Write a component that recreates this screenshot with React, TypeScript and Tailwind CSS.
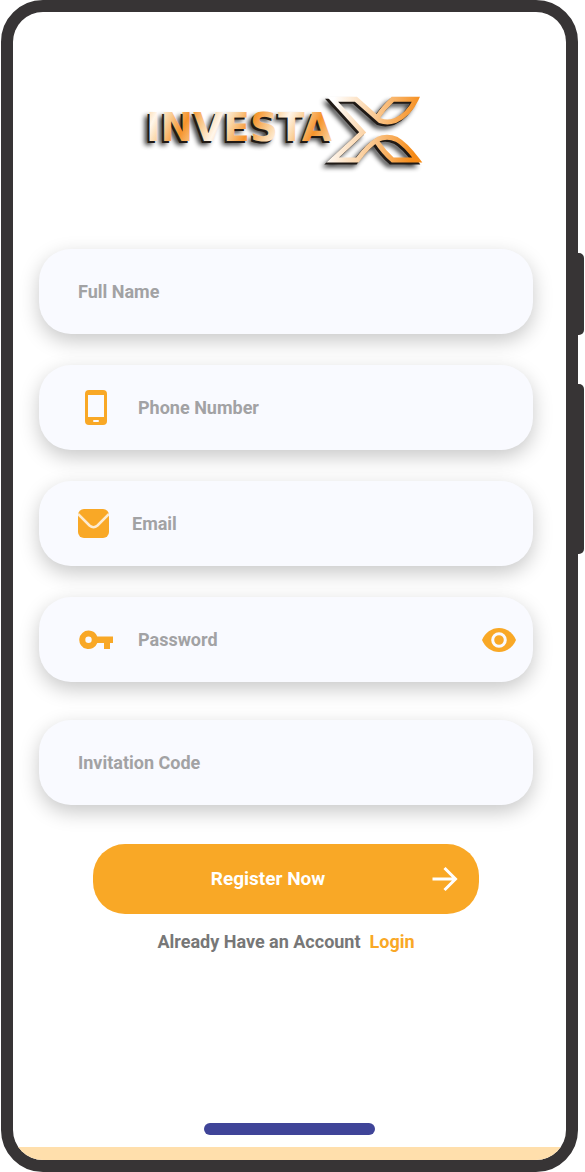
import { useState, type ReactNode } from "react";

function Logo() {
  return (
    <svg viewBox="0 0 900 300" className="w-[300px] max-w-full" role="img" aria-label="InvestaX">
      <defs>
        <linearGradient id="word" gradientUnits="userSpaceOnUse" x1="85" y1="90" x2="165" y2="130" spreadMethod="reflect">
          <stop offset="0" stopColor="#fff6ea" />
          <stop offset="0.4" stopColor="#fad3a0" />
          <stop offset="1" stopColor="#f6932a" />
        </linearGradient>
        <linearGradient id="mark" gradientUnits="userSpaceOnUse" x1="600" y1="120" x2="860" y2="170">
          <stop offset="0" stopColor="#ffffff" />
          <stop offset="0.4" stopColor="#fbd5aa" />
          <stop offset="1" stopColor="#f68b17" />
        </linearGradient>
        <filter id="soft" x="-10%" y="-30%" width="120%" height="170%">
          <feGaussianBlur stdDeviation="8" />
        </filter>
        <g id="cross" fill="none" strokeWidth="15" strokeLinejoin="miter">
          <path d="M742 187Q760 215 788 240H862Q826 192 800 178Q770 165 744 178Q715 195 682 240H608L698 157L608 58H678L750 122Q772 130 795 122Q836 104 858 58H788Q760 84 742 112" />
        </g>
        <text id="name" x="48" y="182" fontSize="117" fontWeight="700" fontFamily="'DejaVu Sans', Inter, sans-serif">
          INVESTA
        </text>
      </defs>
      <g filter="url(#soft)" opacity="0.8" transform="translate(-14 14)">
        <use href="#name" fill="#000" />
        <use href="#cross" stroke="#000" />
      </g>
      <g transform="translate(-6 6)">
        <use href="#name" fill="#201a16" />
        <use href="#cross" stroke="#201a16" />
      </g>
      <use href="#name" fill="url(#word)" />
      <use href="#cross" stroke="url(#mark)" />
    </svg>
  );
}

function PhoneIcon() {
  return (
    <svg viewBox="0 0 22 35" className="h-[35px] w-[22px]" aria-hidden="true">
      <rect width="22" height="35" rx="4" fill="#f9a826" />
      <rect x="3" y="5" width="16" height="22" fill="#f9faff" />
      <rect x="8" y="30" width="6" height="2" rx="1" fill="#f9faff" />
    </svg>
  );
}

function MailIcon() {
  return (
    <svg viewBox="0 0 31 30" className="h-[30px] w-[31px]" aria-hidden="true">
      <rect width="31" height="29" rx="6" fill="#f9a826" />
      <path d="M0 5L11.500 16.500Q15.500 20 19.500 16.500L31 5" fill="none" stroke="#fdebd0" strokeWidth="2.500" />
    </svg>
  );
}

function KeyIcon() {
  return (
    <svg viewBox="0 0 34 20" className="h-5 w-[34px]" aria-hidden="true">
      <path
        fillRule="evenodd"
        fill="#f9a826"
        d="M9.500 0.500A9.300 9.300 0 0 1 18.300 6.500H34V13H31V19H25V13H18.300A9.300 9.300 0 1 1 9.500 .5ZM9.500 6.600A3.200 3.200 0 1 0 9.500 13A3.200 3.200 0 1 0 9.500 6.600Z"
      />
    </svg>
  );
}

function EyeIcon() {
  return (
    <svg viewBox="0 0 34 24" className="h-6 w-[34px]" aria-hidden="true">
      <path d="M17 0C9.500 0 3 4.800 0 12C3 19.200 9.500 24 17 24S31 19.200 34 12C31 4.800 24.500 0 17 0Z" fill="#f9a826" />
      <circle cx="17" cy="12" r="6.300" fill="#f9a826" stroke="#f9faff" strokeWidth="3" />
    </svg>
  );
}

type FieldProps = {
  id: string;
  label: string;
  type?: string;
  icon?: ReactNode;
  iconClass?: string;
  className?: string;
  children?: ReactNode;
};

function Field({ id, label, type = "text", icon, iconClass = "", className = "", children }: FieldProps) {
  return (
    <div
      className={`flex h-[85px] items-center rounded-[32px] bg-[#f9faff] pr-[17px] pl-[39px] shadow-[0_7px_20px_rgba(0,0,0,0.22)] ${className}`}
    >
      {icon && (
        <label htmlFor={id} className={`flex shrink-0 items-center ${iconClass}`}>
          {icon}
        </label>
      )}
      <input
        id={id}
        type={type}
        aria-label={label}
        placeholder={label}
        className="h-full w-full min-w-0 bg-transparent text-[18px] font-bold text-[#555] outline-none placeholder:text-[#a2a2a4]"
      />
      {children}
    </div>
  );
}

export default function App() {
  const [visible, setVisible] = useState(false);

  return (
    <div className="flex min-h-screen bg-white pr-[7px] pl-px font-[Roboto,sans-serif]">
      <div className="relative flex w-full rounded-[42px] border-12 border-[#373435] bg-[#373435]">
        <div className="absolute top-[241px] -right-[18px] h-[82px] w-[7px] rounded-r-[5px] bg-[#373435]" />
        <div className="absolute top-[372px] -right-[18px] h-[170px] w-[7px] rounded-r-[5px] bg-[#373435]" />

        <div className="flex w-full flex-col overflow-hidden rounded-[30px] bg-white">
          <main className="flex flex-col pr-[33px] pl-[26px]">
            <div className="mt-[68px] flex justify-center pr-3">
              <Logo />
            </div>
            <form className="mt-[69px] flex flex-col gap-[31px]" onSubmit={(e) => e.preventDefault()}>
              <Field id="full-name" label="Full Name" />
              <Field id="phone" label="Phone Number" type="tel" icon={<PhoneIcon />} iconClass="w-[60px] pl-[7px]" />
              <Field id="email" label="Email" type="email" icon={<MailIcon />} iconClass="w-[54px]" />
              <Field
                id="password"
                label="Password"
                type={visible ? "text" : "password"}
                icon={<KeyIcon />}
                iconClass="w-[60px] pl-px"
              >
                <button
                  type="button"
                  aria-label={visible ? "Hide password" : "Show password"}
                  onClick={() => setVisible(!visible)}
                  className="shrink-0"
                >
                  <EyeIcon />
                </button>
              </Field>
              <Field id="code" label="Invitation Code" className="mt-[7px]" />
              <button
                type="submit"
                className="relative mx-[54px] mt-2 flex h-[70px] items-center justify-center rounded-[32px] bg-[#f9a826] pr-9 text-[19px] font-bold text-white"
              >
                Register Now
                <svg
                  viewBox="0 0 26 26"
                  className="absolute right-[21px] size-[26px]"
                  fill="none"
                  stroke="currentColor"
                  strokeWidth="3"
                  aria-hidden="true"
                >
                  <path d="M0.500 13H23.500M12.500 2L23.500 13L12.500 24" />
                </svg>
              </button>
            </form>
            <p className="mt-4 flex justify-center gap-[9px] text-[18px] leading-6 font-bold text-[#777]">
              Already Have an Account
              <a href="#login" className="text-[#f9a826]">
                Login
              </a>
            </p>
          </main>

          <div className="mx-auto mt-auto mb-3 h-3 w-[171px] rounded-full bg-[#3f4498]" />
          <div className="h-[13px] bg-[#ffdfac]" />
        </div>
      </div>
    </div>
  );
}
